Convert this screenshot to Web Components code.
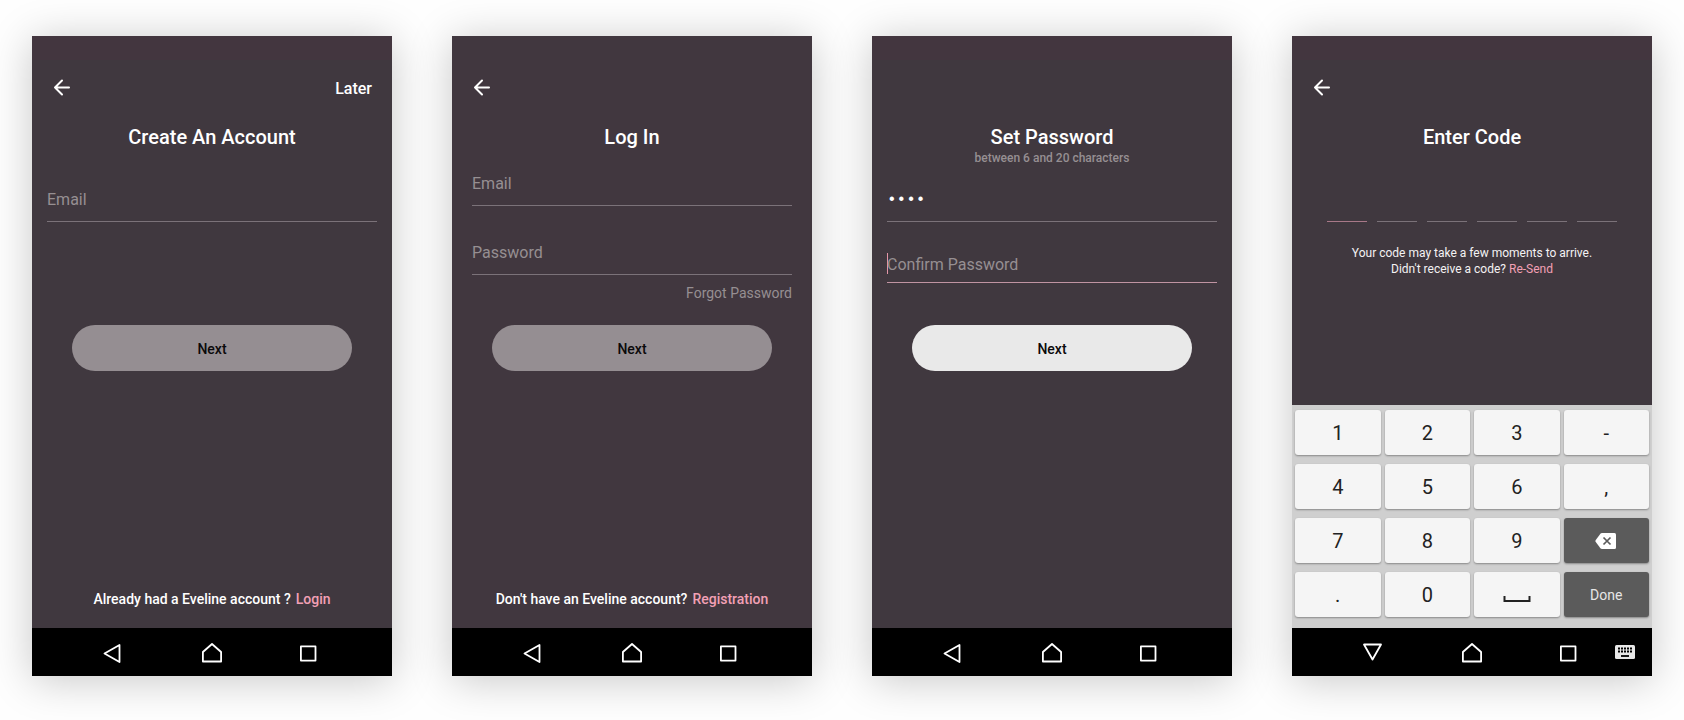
<!DOCTYPE html>
<html lang="en">
<head>
<meta charset="utf-8">
<meta name="viewport" content="width=device-width, initial-scale=1">
<title>Eveline sign-in screens</title>
<style>
  body {
    margin: 0;
    background: #fefefe;
    font-family: Roboto, "Liberation Sans", sans-serif;
    --ink: #40383f;
    --band: #43363f;
    --muted: #968f92;
    --rule: #7b7279;
    --accent: #f2a0b5;
  }
</style>
</head>
<body>
<screen-gallery>
  <phone-screen heading="Create An Account" back action="Later">
    <field-stack roomy><text-field label="Email" type="email"></text-field></field-stack>
    <pill-button slot="submit" dim>Next</pill-button>
    <switch-prompt slot="footer" link="Login">Already had a Eveline account ?</switch-prompt>
  </phone-screen>

  <phone-screen heading="Log In" back style="--ink:#41373f;--band:#41373f">
    <field-stack inset link="Forgot Password">
      <text-field label="Email" type="email"></text-field>
      <text-field label="Password" type="password"></text-field>
    </field-stack>
    <pill-button slot="submit" dim>Next</pill-button>
    <switch-prompt slot="footer" link="Registration">Don't have an Eveline account?</switch-prompt>
  </phone-screen>

  <phone-screen heading="Set Password" note="between 6 and 20 characters">
    <field-stack>
      <text-field label="Password" type="password" value="1234"></text-field>
      <text-field label="Confirm Password" type="password" active></text-field>
    </field-stack>
    <pill-button slot="submit">Next</pill-button>
  </phone-screen>

  <phone-screen heading="Enter Code" back keyboard>
    <field-stack roomy><code-input length="6"></code-input></field-stack>
    <key-pad slot="footer"></key-pad>
  </phone-screen>
</screen-gallery>

<script>
class BaseElement extends HTMLElement {
  connectedCallback() {
    if (this.shadowRoot) return;
    const template = document.createElement('template');
    template.innerHTML = this.render();
    this.attachShadow({ mode: 'open' }).append(template.content.cloneNode(true));
  }
  attr(name) { return this.getAttribute(name) || ''; }
}

customElements.define('screen-gallery', class extends BaseElement {
  render() {
    return `<style>
      :host { display: block; }
      main { display: grid; grid-template-columns: repeat(auto-fit, minmax(300px, 1fr)); gap: 60px; padding: 36px 32px 44px; }
    </style><main><slot></slot></main>`;
  }
});

customElements.define('phone-screen', class extends BaseElement {
  render() {
    return `<style>
      :host { display: flex; flex-direction: column; min-height: 640px; background: var(--ink); color: #fff;
              box-shadow: 0 4px 40px rgba(0,0,0,.22); }
      .status { height: 24px; background: var(--band); }
      header { display: flex; align-items: center; justify-content: space-between; height: 56px; padding: 0 20px 0 18px; }
      button { border: 0; padding: 0; background: none; color: inherit; font: 500 16px/24px Roboto, sans-serif; }
      button.action { padding-top: 2px; }
      button svg { display: block; }
      .content { min-height: 209px; }
      h1 { margin: 0; padding-top: 8px; font-size: 20px; line-height: 26px; font-weight: 500; text-align: center; }
      p { margin: 0; font-size: 12px; line-height: 16px; font-weight: 500; text-align: center; color: var(--muted); }
      footer { margin-top: auto; }
    </style>
    <div class="status"></div>
    <header>
      ${this.hasAttribute('back') ? `<button aria-label="Back"><svg width="24" height="24" viewBox="0 0 24 24" fill="none" stroke="#fff" stroke-width="2" stroke-linecap="round" stroke-linejoin="round"><path d="M19 11.500H5M12 4.500L5 11.500L12 18.500"/></svg></button>` : ''}
      ${this.attr('action') ? `<button class="action">${this.attr('action')}</button>` : ''}
    </header>
    <section class="content">
      <h1>${this.attr('heading')}</h1>
      ${this.attr('note') ? `<p>${this.attr('note')}</p>` : ''}
      <slot></slot>
    </section>
    <slot name="submit"></slot>
    <footer><slot name="footer"></slot></footer>
    <nav-bar ${this.hasAttribute('keyboard') ? 'keyboard' : ''}></nav-bar>`;
  }
});

customElements.define('field-stack', class extends BaseElement {
  render() {
    return `<style>
      :host { display: flex; flex-direction: column; gap: 23px; padding: 10px 15px 0; }
      :host([roomy]) { padding-top: 26px; }
      :host([inset]) { padding-left: 20px; padding-right: 20px; }
      a { align-self: flex-end; margin-top: -15px; font-size: 14px; line-height: 20px; color: var(--muted); text-decoration: none; }
    </style><slot></slot>${this.attr('link') ? `<a href="#forgot">${this.attr('link')}</a>` : ''}`;
  }
});

customElements.define('text-field', class extends BaseElement {
  render() {
    return `<style>
      :host { display: block; }
      input { display: block; box-sizing: border-box; width: 100%; height: 46px; margin: 0; padding: 2px 0 0; border: 0; border-radius: 0;
              border-bottom: 1px solid var(--rule); outline: 0; background: none; color: #fff; font: 400 16px/24px Roboto, sans-serif; }
      input::placeholder { color: var(--muted); opacity: 1; }
      input.filled { font-family: "Liberation Mono", monospace; }
      :host([active]) input { height: 38px; border-color: #c094a2;
              background: linear-gradient(#e396a8, #e396a8) 0 8px / 1px 21px no-repeat; }
    </style><input type="${this.attr('type')}" aria-label="${this.attr('label')}" placeholder="${this.attr('label')}"
      ${this.attr('value') ? `class="filled" value="${this.attr('value')}"` : ''}>`;
  }
});

customElements.define('pill-button', class extends BaseElement {
  render() {
    return `<style>
      :host { display: block; padding: 0 40px; }
      button { display: block; width: 100%; height: 46px; padding: 2px 0 0; border: 0; border-radius: 24px; background: #e9e9e9; color: #0b0a0b;
               font: 500 14px/20px Roboto, sans-serif; }
      :host([dim]) button { background: #958e92; }
    </style><button><slot></slot></button>`;
  }
});

customElements.define('switch-prompt', class extends BaseElement {
  render() {
    return `<style>
      :host { display: flex; justify-content: center; gap: 5px; padding-bottom: 19px; font-size: 14px; line-height: 20px; font-weight: 500; }
      a { color: var(--accent); text-decoration: none; }
    </style><span><slot></slot></span><a href="#switch">${this.attr('link')}</a>`;
  }
});

customElements.define('code-input', class extends BaseElement {
  render() {
    const cells = Array.from({ length: Number(this.attr('length')) },
      (_, i) => `<input inputmode="numeric" maxlength="1" aria-label="Digit ${i + 1}">`).join('');
    return `<style>
      :host { display: block; text-align: center; }
      div { display: flex; justify-content: center; gap: 10px; }
      input { box-sizing: border-box; width: 40px; height: 46px; padding: 0; border: 0; border-radius: 0; border-bottom: 1px solid var(--rule);
              outline: 0; background: none; color: #fff; text-align: center; font: 400 20px/24px Roboto, sans-serif; }
      input:first-child { border-color: #a87888; }
      p { margin: 23px 0 0; font-size: 12px; line-height: 16px; color: #f4f2f3; }
      a { color: var(--accent); text-decoration: none; }
    </style><div>${cells}</div>
    <p>Your code may take a few moments to arrive.<br>Didn't receive a code? <a href="#resend">Re-Send</a></p>`;
  }
});

customElements.define('key-pad', class extends BaseElement {
  render() {
    const erase = `<svg width="22" height="16" viewBox="0 0 22 16"><path d="M7 0H19.500Q21 0 21 1.500V14.500Q21 16 19.500 16H7Q6 16 5.400 15.200L.6 8.700Q.2 8 .6 7.300L5.400 .8Q6 0 7 0Z" fill="#fff"/><path d="M8.500 4.500L15.500 11.500M15.500 4.500L8.500 11.500" stroke="#5b5b5b" stroke-width="1.700"/></svg>`;
    const space = `<svg width="28" height="8" viewBox="0 0 28 8"><path d="M1.500 1V6H26.500V1" fill="none" stroke="#222" stroke-width="2"/></svg>`;
    const key = k => k === 'erase' ? `<button class="dark" aria-label="Delete">${erase}</button>`
      : k === 'space' ? `<button class="space" aria-label="Space">${space}</button>`
      : k === 'Done' ? `<button class="dark">Done</button>` : `<button>${k}</button>`;
    const keys = ['1','2','3','-','4','5','6',',','7','8','9','erase','.','0','space','Done'];
    return `<style>
      :host { display: grid; grid-template-columns: repeat(4, 1fr); grid-auto-rows: 45px; gap: 9px 4px; padding: 5px 3px 11px; background: #cfcfcf; }
      button { display: flex; align-items: center; justify-content: center; border: 0; padding: 0; border-radius: 3px; background: #f5f5f5;
               color: #222; box-shadow: 0 1px 2px rgba(0,0,0,.35); font: 400 20px/24px Roboto, sans-serif; }
      .space { padding-top: 8px; }
      .dark { background: #5b5b5b; color: #e6e6e6; font-size: 14px; }
    </style>${keys.map(key).join('')}`;
  }
});

customElements.define('nav-bar', class extends BaseElement {
  render() {
    const icon = path => `<svg width="24" height="24" viewBox="0 0 24 24" fill="none" stroke="#fff" stroke-width="1.800" stroke-linejoin="round">${path}</svg>`;
    const withKeyboard = this.hasAttribute('keyboard');
    const back = withKeyboard ? '<path d="M2 4.500H19L10.500 19.500Z"/>' : '<path d="M2.500 13.500L17.500 5V22Z"/>';
    const keyDots = [5.5, 8.5, 11.5, 14.5, 17.5].map(x => `<path d="M${x - 0.5} 8.500h2M${x - 0.5} 11.500h2"/>`).join('');
    const keyboard = `<button class="keyboard" aria-label="Switch keyboard"><svg width="24" height="24" viewBox="0 0 24 24"><rect x="2" y="5" width="20" height="14" rx="1.500" fill="#e8e8e8"/><g stroke="#000" stroke-width="1.800">${keyDots}<path d="M8 16h8"/></g></svg></button>`;
    return `<style>
      :host { display: block; }
      nav { display: grid; grid-template-columns: minmax(0, 1fr) repeat(3, 98px) minmax(0, 1fr); height: 48px; background: #000; }
      button { display: flex; align-items: center; justify-content: center; border: 0; padding: 0; background: none; }
      button:first-child { grid-column: 2; }
      .keyboard { justify-self: end; margin-right: 15px; }
    </style>
    <nav>
      <button aria-label="Back">${icon(back)}</button>
      <button aria-label="Home">${icon('<path d="M2.900 21.500V12L12 4L21.100 12V21.500Z"/>')}</button>
      <button aria-label="Recent apps">${icon('<rect x="2.900" y="6.400" width="14.600" height="14.200"/>')}</button>
      ${withKeyboard ? keyboard : ''}
    </nav>`;
  }
});
</script>
</body>
</html>
